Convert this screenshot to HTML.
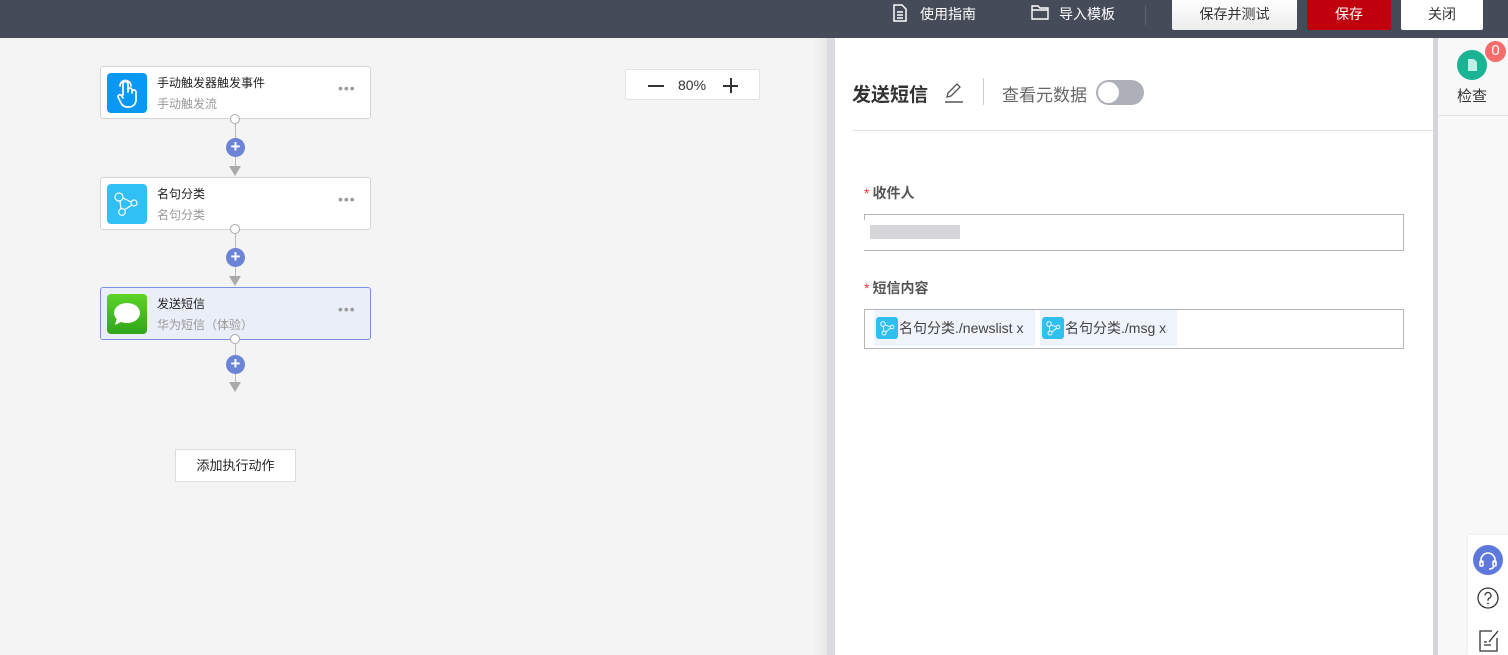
<!DOCTYPE html>
<html><head><meta charset="utf-8"><style>
*{margin:0;padding:0;box-sizing:border-box}
body{width:1508px;height:655px;overflow:hidden;background:#f4f4f4;font-family:"Liberation Sans","Noto Sans CJK SC",sans-serif;position:relative;color:#333}
.top{position:absolute;left:0;top:0;width:1508px;height:38px;background:#454b58}
.tl{position:absolute;top:5px;color:#fff;font-size:14px;line-height:18px}
.btn{position:absolute;top:0;height:30px;font-size:14px;line-height:29px;text-align:center;border-radius:0 0 2px 2px}
.node{position:absolute;left:100px;width:271px;height:53px;background:#fff;border:1px solid #d5d5d5;border-radius:3px}
.node .ic{position:absolute;left:6px;top:6px;width:40px;height:40px;border-radius:4px}
.node .t1{position:absolute;left:56px;top:7px;font-size:12px;color:#222}
.node .t2{position:absolute;left:56px;top:28px;font-size:12px;color:#999}
.node .dots{position:absolute;left:237px;top:13px;font-size:14px;color:#999;letter-spacing:1px}
.line{position:absolute;left:235px;width:1px;background:#bbb}
.circ{position:absolute;left:230px;width:10px;height:10px;border:1px solid #aaa;border-radius:50%;background:#fff}
.plus{position:absolute;left:226px;width:19px;height:19px;border-radius:50%;background:#6b84d6;color:#fff;text-align:center;font-size:17px;line-height:18px;font-weight:bold}
.arr{position:absolute;left:229px;width:0;height:0;border-left:6px solid transparent;border-right:6px solid transparent;border-top:10px solid #aaa}
.panel{position:absolute;left:835px;top:38px;width:598px;height:617px;background:#fff}
.lbl{position:absolute;left:864px;font-size:14px;color:#555;font-weight:bold}
.lbl b{color:#e33;font-weight:normal;margin-right:3px}
.tag{position:absolute;top:310px;height:36px;background:#eff3fb;font-size:14px;color:#444;line-height:36px}
.tag svg{display:inline-block;vertical-align:middle;background:#30c0f0;border-radius:3px;margin:-3px 1px 0 2px}
</style></head><body>
<div class="top">
  <svg style="position:absolute;left:893px;top:4px" width="14" height="18" viewBox="0 0 14 18"><path d="M1 1h8l4 4v12H1z M4 8h6 M4 11h6 M4 14h6" fill="none" stroke="#fff" stroke-width="1.5"/></svg>
  <div class="tl" style="left:920px">使用指南</div>
  <svg style="position:absolute;left:1031px;top:5px" width="18" height="15" viewBox="0 0 18 15"><path d="M1 1h6l2 2h8v11H1z M1 5h16" fill="none" stroke="#fff" stroke-width="1.4"/></svg>
  <div class="tl" style="left:1059px">导入模板</div>
  <div style="position:absolute;left:1145px;top:5px;width:1px;height:20px;background:#5d6370"></div>
  <div class="btn" style="left:1172px;width:125px;background:linear-gradient(#fff,#ececec);color:#333">保存并测试</div>
  <div class="btn" style="left:1307px;width:84px;background:#c0000c;color:#fff">保存</div>
  <div class="btn" style="left:1401px;width:82px;background:#fff;color:#333">关闭</div>
</div>

<div class="node" style="top:66px">
  <div class="ic" style="background:#0a98f5"><svg width="40" height="40" viewBox="0 0 40 40"><path d="M16 22V11a2.5 2.5 0 0 1 5 0v8 M21 17a2 2 0 0 1 4 0v3 M25 19a2 2 0 0 1 4 0v8a7 7 0 0 1-7 7h-2a7 7 0 0 1-6-4l-3-6a2 2 0 0 1 3-2l2 3 M13 13a5.5 5.5 0 0 1 11 0" fill="none" stroke="#fff" stroke-width="1.7" stroke-linecap="round"/></svg></div>
  <div class="t1">手动触发器触发事件</div><div class="t2">手动触发流</div><div class="dots">•••</div>
</div>
<div class="circ" style="top:114px"></div><div class="line" style="top:124px;height:42px"></div>
<div class="plus" style="top:138px">+</div><div class="arr" style="top:166px"></div>

<div class="node" style="top:177px">
  <div class="ic" style="background:#30c0f5"><svg width="40" height="40" viewBox="0 0 40 40" fill="none" stroke="#fff" stroke-width="1.2"><circle cx="12" cy="13" r="4"/><circle cx="27" cy="19" r="3"/><circle cx="15" cy="28" r="3.3"/><path d="M16 14l8 4 M13 17l1 8 M17 26l8-5"/></svg></div>
  <div class="t1">名句分类</div><div class="t2">名句分类</div><div class="dots">•••</div>
</div>
<div class="circ" style="top:224px"></div><div class="line" style="top:234px;height:42px"></div>
<div class="plus" style="top:248px">+</div><div class="arr" style="top:276px"></div>

<div class="node" style="top:287px;background:#eaeef8;border-color:#7b92e0">
  <div class="ic" style="background:linear-gradient(#5cd428,#2fa61a)"><svg width="40" height="40" viewBox="0 0 40 40"><ellipse cx="20" cy="19" rx="13" ry="10" fill="#fff"/><path d="M10 24l-2 7 8-4z" fill="#fff"/></svg></div>
  <div class="t1">发送短信</div><div class="t2">华为短信（体验）</div><div class="dots">•••</div>
</div>
<div class="circ" style="top:334px"></div><div class="line" style="top:344px;height:40px"></div>
<div class="plus" style="top:355px">+</div><div class="arr" style="top:382px"></div>

<div style="position:absolute;left:175px;top:449px;width:121px;height:33px;background:#fff;border:1px solid #ddd;font-size:13px;text-align:center;line-height:31px;color:#222">添加执行动作</div>

<div style="position:absolute;left:625px;top:69px;width:135px;height:31px;background:#fff;border:1px solid #e3e3e3;border-radius:2px;font-size:14px;line-height:30px;color:#333">
  <span style="position:absolute;left:22px;top:15px;width:16px;height:1.5px;background:#333"></span>
  <span style="position:absolute;left:52px">80%</span>
  <span style="position:absolute;left:97px;top:15px;width:15px;height:1.5px;background:#333"></span>
  <span style="position:absolute;left:104px;top:8px;width:1.5px;height:15px;background:#333"></span>
</div>

<div style="position:absolute;left:812px;top:38px;width:15px;height:617px;background:linear-gradient(90deg,#f4f4f4,#e8e8e8)"></div>
<div style="position:absolute;left:827px;top:38px;width:8px;height:617px;background:#dcdce0"></div>
<div class="panel"></div>
<div style="position:absolute;left:852px;top:80px;font-size:19px;font-weight:bold;color:#333">发送短信</div>
<svg style="position:absolute;left:942px;top:80px" width="24" height="24" viewBox="0 0 24 24"><path d="M5 17l1-4 9-9 3 3-9 9z" fill="none" stroke="#555" stroke-width="1.3"/><path d="M3 22h18" stroke="#555" stroke-width="1.5"/></svg>
<div style="position:absolute;left:983px;top:78px;width:1px;height:27px;background:#ccc"></div>
<div style="position:absolute;left:1002px;top:81px;font-size:17px;color:#666">查看元数据</div>
<div style="position:absolute;left:1096px;top:80px;width:48px;height:25px;border-radius:13px;background:#aeb0b8"><div style="position:absolute;left:2px;top:2px;width:21px;height:21px;border-radius:50%;background:#fff"></div></div>
<div style="position:absolute;left:853px;top:130px;width:580px;height:1px;background:#e0e0e6"></div>

<div class="lbl" style="top:183px"><b>*</b>收件人</div>
<div style="position:absolute;left:864px;top:214px;width:540px;height:37px;border:1px solid #b5b5bb"></div>
<div style="position:absolute;left:855px;top:220px;width:122px;height:30px;background:#fff"></div>
<div style="position:absolute;left:870px;top:225px;width:90px;height:14px;background:#d5d5d7"></div>
<div class="lbl" style="top:278px"><b>*</b>短信内容</div>
<div style="position:absolute;left:864px;top:309px;width:540px;height:40px;border:1px solid #b5b5bb"></div>
<div class="tag" style="left:874px;width:161px"><svg width="22" height="22" viewBox="0 0 22 22" fill="none" stroke="#fff" stroke-width=".9"><circle cx="7" cy="7" r="2.3"/><circle cx="16" cy="10" r="1.8"/><circle cx="8" cy="16" r="2"/><path d="M9 8l5 1.5 M7.5 9.5v4.5 M10 15l4.5-4"/></svg>名句分类./newslist x</div>
<div class="tag" style="left:1040px;width:137px"><svg width="22" height="22" viewBox="0 0 22 22" fill="none" stroke="#fff" stroke-width=".9"><circle cx="7" cy="7" r="2.3"/><circle cx="16" cy="10" r="1.8"/><circle cx="8" cy="16" r="2"/><path d="M9 8l5 1.5 M7.5 9.5v4.5 M10 15l4.5-4"/></svg>名句分类./msg x</div>

<div style="position:absolute;left:1433px;top:38px;width:5px;height:617px;background:#d6d6da"></div>
<div style="position:absolute;left:1438px;top:38px;width:70px;height:617px;background:#f8f8f8"></div>
<div style="position:absolute;left:1438px;top:115px;width:70px;height:1px;background:#e3e3e8"></div>
<div style="position:absolute;left:1457px;top:50px;width:30px;height:30px;border-radius:50%;background:#1ab394"><svg width="30" height="30" viewBox="0 0 30 30"><path d="M11 9h6l3 3v9h-9z" fill="#bff0e3"/></svg></div>
<div style="position:absolute;left:1485px;top:41px;width:21px;height:21px;border-radius:50%;background:#f56c6c;color:#fff;font-size:15px;text-align:center;line-height:20px">0</div>
<div style="position:absolute;left:1457px;top:85px;font-size:15px;color:#333">检查</div>

<div style="position:absolute;left:1468px;top:535px;width:40px;height:120px;background:#fff;box-shadow:0 0 3px rgba(0,0,0,.08)"></div>
<div style="position:absolute;left:1473px;top:545px;width:30px;height:30px;border-radius:50%;background:#5f78dc"><svg width="30" height="30" viewBox="0 0 30 30" fill="none" stroke="#fff" stroke-width="1.6"><path d="M8 18v-3a7 7 0 0 1 14 0v3"/><rect x="7" y="16" width="3" height="5" rx="1"/><rect x="20" y="16" width="3" height="5" rx="1"/><path d="M21 21q-1 3-5 3"/></svg></div>
<svg style="position:absolute;left:1477px;top:587px" width="22" height="22" viewBox="0 0 22 22"><circle cx="11" cy="11" r="10" fill="none" stroke="#333" stroke-width="1.3"/><path d="M8 8.5a3 3 0 1 1 4 2.8c-1 .5-1 1-1 2.5" fill="none" stroke="#333" stroke-width="1.3"/><circle cx="11" cy="16.5" r=".9" fill="#333"/></svg>
<svg style="position:absolute;left:1478px;top:628px" width="22" height="24" viewBox="0 0 22 24" fill="none" stroke="#333" stroke-width="1.3"><path d="M14 3H2v20h17V10"/><path d="M6 17h7 M6 14h3 M11 14l9-11"/></svg>
</body></html>
